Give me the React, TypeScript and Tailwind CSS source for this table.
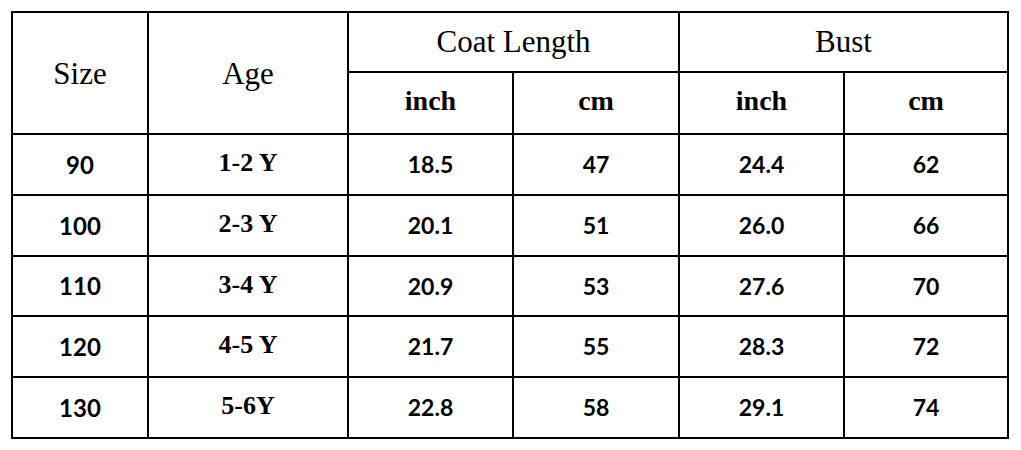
const rows = [
  { size: '90', age: '1-2 Y', coatIn: '18.5', coatCm: '47', bustIn: '24.4', bustCm: '62' },
  { size: '100', age: '2-3 Y', coatIn: '20.1', coatCm: '51', bustIn: '26.0', bustCm: '66' },
  { size: '110', age: '3-4 Y', coatIn: '20.9', coatCm: '53', bustIn: '27.6', bustCm: '70' },
  { size: '120', age: '4-5 Y', coatIn: '21.7', coatCm: '55', bustIn: '28.3', bustCm: '72' },
  { size: '130', age: '5-6Y', coatIn: '22.8', coatCm: '58', bustIn: '29.1', bustCm: '74' },
];

const rowHeights = ['h-[61px]', 'h-[61px]', 'h-[60px]', 'h-[61px]', 'h-[61px]'];

const cell = 'border-r-2 border-b-2 border-black p-0 text-center align-middle';

export default function App() {
  return (
    <div className="min-h-[450px] w-[1021px] bg-white pl-[11px] pt-[11px] text-black">
      <table className="table-fixed border-separate border-spacing-0 border-t-2 border-l-2 border-black w-[998px]">
        <colgroup>
          <col className="w-[136px]" />
          <col className="w-[200px]" />
          <col className="w-[165px]" />
          <col className="w-[166px]" />
          <col className="w-[165px]" />
          <col className="w-[164px]" />
        </colgroup>
        <thead>
          <tr className="h-[60px]">
            <th rowSpan={2} className={`${cell} font-['Liberation_Serif'] text-[31px] font-normal pt-[2px]`}>
              Size
            </th>
            <th rowSpan={2} className={`${cell} font-['Liberation_Serif'] text-[31px] font-normal pt-[2px]`}>
              Age
            </th>
            <th colSpan={2} className={`${cell} font-['Liberation_Serif'] text-[31px] font-normal`}>
              Coat Length
            </th>
            <th colSpan={2} className={`${cell} font-['Liberation_Serif'] text-[31px] font-normal`}>
              Bust
            </th>
          </tr>
          <tr className="h-[62px]">
            <th className={`${cell} font-['Liberation_Serif'] text-[28px] font-bold pb-1`}>inch</th>
            <th className={`${cell} font-['Liberation_Serif'] text-[28px] font-bold pb-1`}>cm</th>
            <th className={`${cell} font-['Liberation_Serif'] text-[28px] font-bold pb-1`}>inch</th>
            <th className={`${cell} font-['Liberation_Serif'] text-[28px] font-bold pb-1`}>cm</th>
          </tr>
        </thead>
        <tbody>
          {rows.map((r, i) => (
            <tr key={r.size} className={rowHeights[i]}>
              <td className={`${cell} font-['Lato'] font-bold text-[24px]`}>{r.size}</td>
              <td className={`${cell} font-['Liberation_Serif'] text-[26px] font-bold pb-1`}>{r.age}</td>
              <td className={`${cell} font-['Lato'] font-bold text-[23px]`}>{r.coatIn}</td>
              <td className={`${cell} font-['Lato'] font-bold text-[23px]`}>{r.coatCm}</td>
              <td className={`${cell} font-['Lato'] font-bold text-[23px]`}>{r.bustIn}</td>
              <td className={`${cell} font-['Lato'] font-bold text-[23px]`}>{r.bustCm}</td>
            </tr>
          ))}
        </tbody>
      </table>
    </div>
  );
}
